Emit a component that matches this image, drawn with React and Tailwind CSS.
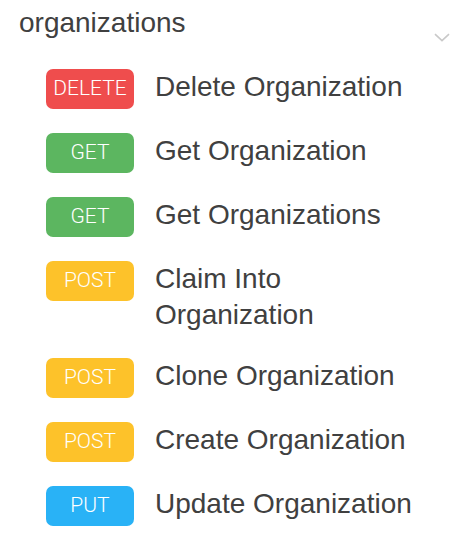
import React from "react";

const items = [
  { m: "DELETE", bg: "bg-[#ef4d4d]", label: "Delete Organization" },
  { m: "GET", bg: "bg-[#5cb660]", label: "Get Organization" },
  { m: "GET", bg: "bg-[#5cb660]", label: "Get Organizations" },
  { m: "POST", bg: "bg-[#fdc22a]", label: "Claim Into Organization" },
  { m: "POST", bg: "bg-[#fdc22a]", label: "Clone Organization" },
  { m: "POST", bg: "bg-[#fdc22a]", label: "Create Organization" },
  { m: "PUT", bg: "bg-[#29b2f6]", label: "Update Organization" },
];

export default function App() {
  return (
    <div className="w-[466px] h-[544px] bg-white font-['Liberation_Sans',Arial,sans-serif] text-[#404040]">
      <div className="flex items-start justify-between pl-[19px] pr-[16px] pt-[5px]">
        <div className="text-[28px] leading-[36px]">organizations</div>
        <svg width="16" height="9" viewBox="0 0 16 9" className="mt-[28px]" fill="none">
          <path d="M1 1.2 L8 7.6 L15 1.2" stroke="#c9c9c9" strokeWidth="1.6" />
        </svg>
      </div>
      <div className="flex flex-col pl-[46px] pt-[27px] gap-[24px]">
        {items.map((it, i) => (
          <div key={i} className={`flex items-start gap-[21px] ${i === 3 ? "pb-[1px]" : ""}`}>
            <div
              className={`${it.bg} w-[88px] h-[40px] shrink-0 rounded-[7px] flex items-center justify-center text-white text-[21px] font-light font-['Roboto',sans-serif]`}
            >
              {it.m}
            </div>
            <div className="text-[28px] leading-[36px] w-[270px]">{it.label}</div>
          </div>
        ))}
      </div>
    </div>
  );
}
